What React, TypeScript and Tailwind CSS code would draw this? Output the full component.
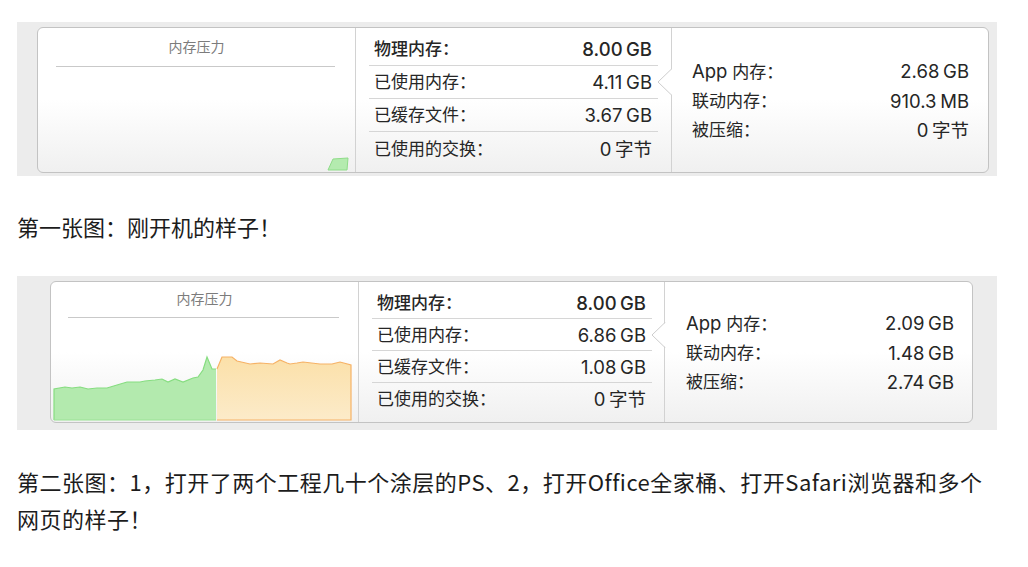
type Row = [string, string];

const FIRST_MIDDLE: Row[] = [
  ["物理内存：", "8.00 GB"],
  ["已使用内存：", "4.11 GB"],
  ["已缓存文件：", "3.67 GB"],
  ["已使用的交换：", "0 字节"],
];
const FIRST_RIGHT: Row[] = [
  ["App 内存：", "2.68 GB"],
  ["联动内存：", "910.3 MB"],
  ["被压缩：", "0 字节"],
];
const SECOND_MIDDLE: Row[] = [
  ["物理内存：", "8.00 GB"],
  ["已使用内存：", "6.86 GB"],
  ["已缓存文件：", "1.08 GB"],
  ["已使用的交换：", "0 字节"],
];
const SECOND_RIGHT: Row[] = [
  ["App 内存：", "2.09 GB"],
  ["联动内存：", "1.48 GB"],
  ["被压缩：", "2.74 GB"],
];

// top edge of the pressure graph, in page coordinates of the second shot
const GREEN_EDGE =
  "54,389 65,387 72,388 80,387 88,389 97,388 107,388 117,385 127,382 140,382 145,381 155,380 162,379 168,382 175,379 183,382 193,378 198,377 203,370 207,357 212,369 216,369";
const ORANGE_EDGE =
  "217,369 222,357 232,357 237,361 250,364 260,363 273,364 280,360 287,363 290,364 297,363 303,362 320,364 332,364 340,362 351,365";

function Chevron() {
  return (
    <svg
      className="absolute right-[-15px] top-1/2 z-10 -translate-y-1/2"
      width="16"
      height="26"
      viewBox="0 0 16 26"
    >
      <polygon points="15,0 1,13 15,26 16,26 16,0" fill="#ffffff" />
      <polyline
        points="14.5,0 1,13 14.5,26"
        fill="none"
        stroke="#cdcdcd"
        strokeWidth="1"
      />
    </svg>
  );
}

// Latin parts (numbers, units, "App") are set a little larger, like SF on macOS
function Value({ text }: { text: string }) {
  return <span className="text-[18.5px] [word-spacing:-1.5px]">{text}</span>;
}

function Label({ text }: { text: string }) {
  if (text.startsWith("App")) {
    return (
      <span>
        <span className="text-[18.5px]">App</span>
        {text.slice(3)}
      </span>
    );
  }
  return <span>{text}</span>;
}

function MiddleColumn({
  rows,
  widthClass,
  rowClass,
  padClass,
}: {
  rows: Row[];
  widthClass: string;
  rowClass: string;
  padClass: string;
}) {
  return (
    <div className={`shrink-0 border-r border-[#d2d2d2] ${widthClass} ${padClass}`}>
      {rows.map(([label, value], i) => (
        <div
          key={label}
          className={`relative flex items-center justify-between pl-[5px] pr-[6px] pt-[2px] ${rowClass} ${
            i < rows.length - 1 ? "border-b border-[#d6d6d6]" : ""
          } ${i === 0 ? "font-medium" : ""}`}
        >
          <Label text={label} />
          <Value text={value} />
          {i === 1 && <Chevron />}
        </div>
      ))}
    </div>
  );
}

function RightColumn({ rows, padClass }: { rows: Row[]; padClass: string }) {
  return (
    <div className={`flex min-w-0 flex-1 flex-col justify-center pt-[3px] ${padClass}`}>
      {rows.map(([label, value]) => (
        <div key={label} className="flex h-[29.5px] items-center justify-between">
          <Label text={label} />
          <Value text={value} />
        </div>
      ))}
    </div>
  );
}

function PressureColumn({
  widthClass,
  titleClass,
  lineClass,
  children,
}: {
  widthClass: string;
  titleClass: string;
  lineClass: string;
  children: React.ReactNode;
}) {
  return (
    <div className={`flex shrink-0 flex-col border-r border-[#d2d2d2] ${widthClass}`}>
      <div className={`text-center text-[14px] leading-[18px] text-[#7c7c7c] ${titleClass}`}>
        内存压力
      </div>
      <div className={`h-px bg-[#c9c9c9] ${lineClass}`} />
      <div className="mt-auto">{children}</div>
    </div>
  );
}

function Band({
  bandClass,
  children,
}: {
  bandClass: string;
  children: React.ReactNode;
}) {
  return (
    <div className={`h-[154px] w-[980px] bg-[#ececec] ${bandClass}`}>
      <div className="flex h-full overflow-hidden rounded-[6px] border border-[#c3c3c3] bg-gradient-to-b from-white from-50% to-[#f0f0f0] font-['Inter','Noto_Sans_CJK_SC',sans-serif] text-[17px] text-[#262626]">
        {children}
      </div>
    </div>
  );
}

export default function App() {
  return (
    <div className="min-h-[567px] bg-white pl-[17px] pt-[22px] font-['Noto_Sans_CJK_SC','Noto_Sans',sans-serif] text-[#1c1c1c]">
      <Band bandClass="pl-[20px] pr-[8px] pt-[5px] pb-[3px]">
        <PressureColumn
          widthClass="w-[318px]"
          titleClass="pt-[10px]"
          lineClass="ml-[18px] mr-[20px] mt-[10px]"
        >
          <svg className="block" width="317" height="22" viewBox="38 150 317 22">
            <polygon
              points="328,170 333,159 348,158 347,170"
              fill="#b4ebaf"
              stroke="#8fdc89"
              strokeWidth="1"
            />
          </svg>
        </PressureColumn>
        <MiddleColumn
          rows={FIRST_MIDDLE}
          widthClass="w-[316px]"
          rowClass="h-[33px]"
          padClass="px-[13px] pt-[5px]"
        />
        <RightColumn rows={FIRST_RIGHT} padClass="pl-[20px] pr-[19px]" />
      </Band>

      <p className="mt-[32px] text-[22px] leading-[37px]">第一张图：刚开机的样子！</p>

      <div className="mt-[31px]">
        <Band bandClass="pl-[33px] pr-[24px] pt-[5px] pb-[7px]">
          <PressureColumn
            widthClass="w-[308px]"
            titleClass="pt-[8px]"
            lineClass="ml-[17px] mr-[19px] mt-[9px]"
          >
            <svg className="mb-px block" width="307" height="81" viewBox="51 340 307 81">
              <defs>
                <linearGradient id="orangeFill" x1="0" y1="0" x2="0" y2="1">
                  <stop offset="0" stopColor="#fbe0a9" />
                  <stop offset="1" stopColor="#fcebc9" />
                </linearGradient>
              </defs>
              <polygon points={`${GREEN_EDGE} 216,420 54,420`} fill="#b3eaae" />
              <polyline
                points={`54,420 ${GREEN_EDGE}`}
                fill="none"
                stroke="#86dd80"
                strokeWidth="1.2"
              />
              <line x1="54" y1="420" x2="216" y2="420" stroke="#9be396" strokeWidth="1" />
              <polygon points={`${ORANGE_EDGE} 351,420 217,420`} fill="url(#orangeFill)" />
              <polyline
                points={`${ORANGE_EDGE} 351,420 217,420`}
                fill="none"
                stroke="#f6b266"
                strokeWidth="1.2"
              />
            </svg>
          </PressureColumn>
          <MiddleColumn
            rows={SECOND_MIDDLE}
            widthClass="w-[306px]"
            rowClass="h-[32px]"
            padClass="pl-[13px] pr-[12px] pt-[5px]"
          />
          <RightColumn rows={SECOND_RIGHT} padClass="pl-[21px] pr-[18px]" />
        </Band>
      </div>

      <p className="mt-[33px] text-[22px] leading-[37px] tracking-[0.5px]">
        第二张图：1，打开了两个工程几十个涂层的PS、2，打开Office全家桶、打开Safari浏览器和多个
        <br />
        网页的样子！
      </p>
    </div>
  );
}
